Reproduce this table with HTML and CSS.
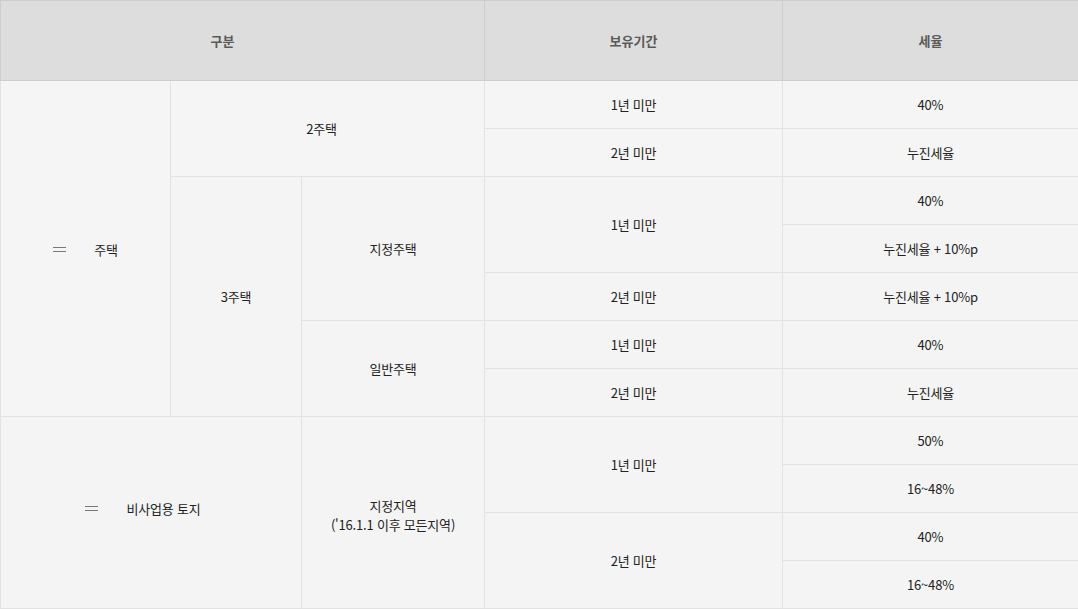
FILE: index.html
```html
<!DOCTYPE html>
<html lang="ko">
<head>
<meta charset="utf-8">
<title>세율표</title>
<link rel="stylesheet" href="styles.css">
</head>
<body>
<table class="tax-table">
  <colgroup>
    <col class="c1"><col class="c2"><col class="c3"><col class="c4"><col class="c5">
  </colgroup>
  <thead>
    <tr>
      <th colspan="3" class="th-div">구분</th>
      <th>보유기간</th>
      <th>세율</th>
    </tr>
  </thead>
  <tbody>
    <tr>
      <td rowspan="7"><span class="cat"><span class="eq"></span><span>주택</span></span></td>
      <td colspan="2" rowspan="2" class="td-two">2주택</td>
      <td>1년 미만</td>
      <td>40%</td>
    </tr>
    <tr>
      <td>2년 미만</td>
      <td>누진세율</td>
    </tr>
    <tr>
      <td rowspan="5">3주택</td>
      <td rowspan="3">지정주택</td>
      <td rowspan="2">1년 미만</td>
      <td>40%</td>
    </tr>
    <tr>
      <td>누진세율 + 10%p</td>
    </tr>
    <tr>
      <td>2년 미만</td>
      <td>누진세율 + 10%p</td>
    </tr>
    <tr>
      <td rowspan="2">일반주택</td>
      <td>1년 미만</td>
      <td>40%</td>
    </tr>
    <tr>
      <td>2년 미만</td>
      <td>누진세율</td>
    </tr>
    <tr>
      <td colspan="2" rowspan="4" class="td-land"><span class="cat"><span class="eq"></span><span>비사업용 토지</span></span></td>
      <td rowspan="4" class="td-zone">지정지역<br>('16.1.1 이후 모든지역)</td>
      <td rowspan="2">1년 미만</td>
      <td>50%</td>
    </tr>
    <tr>
      <td>16~48%</td>
    </tr>
    <tr>
      <td rowspan="2">2년 미만</td>
      <td>40%</td>
    </tr>
    <tr>
      <td>16~48%</td>
    </tr>
  </tbody>
</table>
</body>
</html>
```

FILE: styles.css
```css
html, body {
  margin: 0;
  padding: 0;
  background: #ffffff;
}

body {
  font-family: "Noto Sans CJK KR", "Noto Sans", sans-serif;
  font-size: 13px;
  color: #222222;
}

.tax-table {
  width: 1078px;
  border-collapse: collapse;
  table-layout: fixed;
  border: 1px solid #d6d6d6;
}

.c1 { width: 170px; }
.c2 { width: 131px; }
.c3 { width: 183px; }
.c4 { width: 298px; }
.c5 { width: 296px; }

.tax-table th {
  height: 79px;
  padding: 0;
  background: #dddddd;
  border: 1px solid #cdcdcd;
  color: #5a5a5a;
  font-weight: 700;
  font-size: 13px;
  text-align: center;
  vertical-align: middle;
}

.tax-table .th-div {
  padding-right: 40px;
}

.tax-table td {
  height: 47px;
  padding: 0;
  background: #f4f4f4;
  border: 1px solid #e2e2e2;
  text-align: center;
  vertical-align: middle;
  line-height: 19px;
  letter-spacing: -0.2px;
}

.tax-table tbody tr:first-child td,
.tax-table tbody tr:nth-child(2) td {
  background: #f5f5f5;
}

.tax-table .td-two {
  padding-right: 12px;
}

.tax-table .td-land {
  padding-bottom: 10px;
}

.tax-table .td-zone {
  padding-top: 4px;
}

.cat {
  display: inline-flex;
  align-items: center;
  gap: 28px;
  vertical-align: middle;
}

.td-land .cat {
  margin-right: 16px;
}

.eq {
  display: inline-block;
  width: 13px;
  height: 3px;
  border-top: 1px solid #777777;
  border-bottom: 1px solid #777777;
}
```
